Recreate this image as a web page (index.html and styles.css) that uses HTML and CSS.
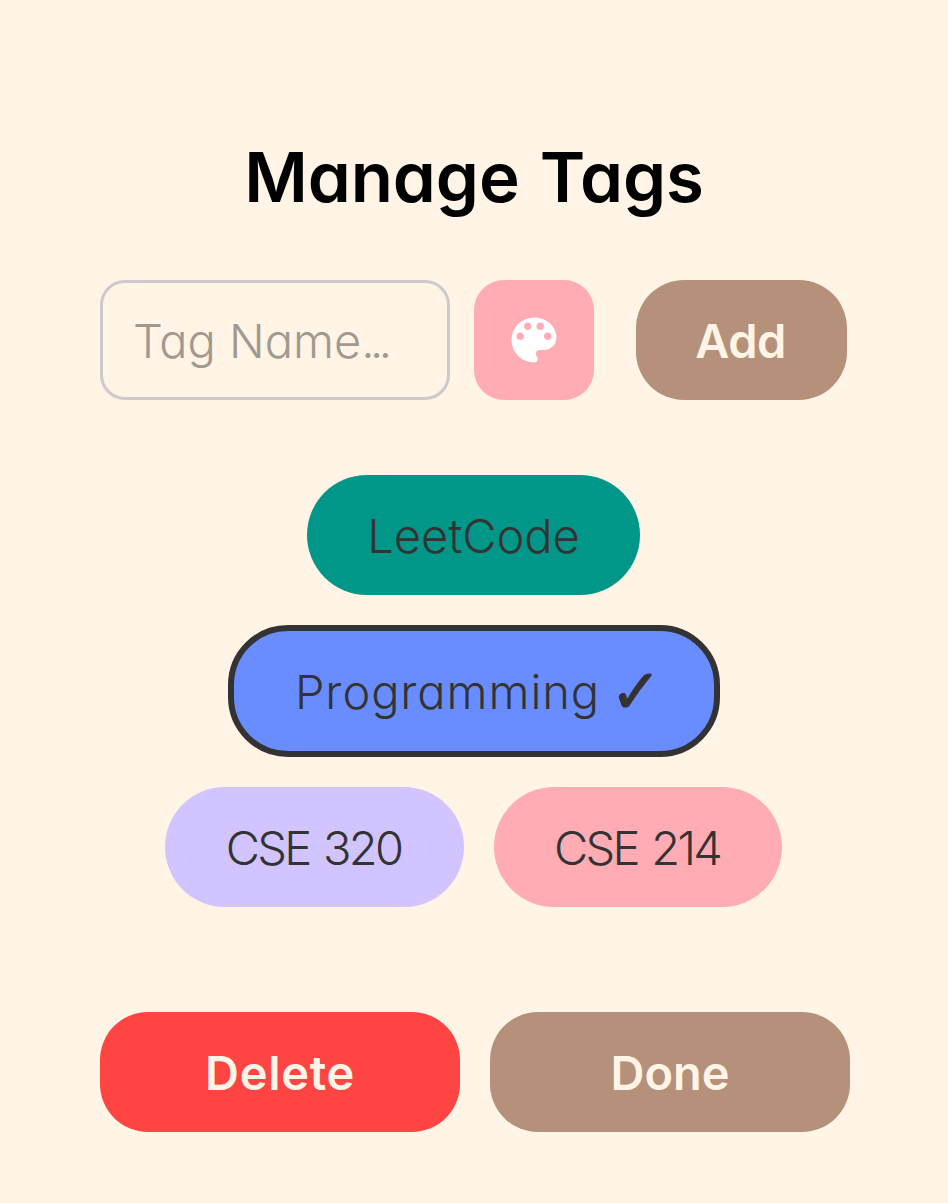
FILE: index.html
```html
<!DOCTYPE html>
<html lang="en">
<head>
<meta charset="utf-8">
<title>Manage Tags</title>
<link rel="stylesheet" href="styles.css">
</head>
<body>
<main class="panel">
  <h1 class="title">Manage Tags</h1>
  <div class="new-tag">
    <div class="tag-input" role="textbox" aria-label="Tag name"><span>Tag Name<span class="dots">...</span></span></div>
    <button class="color-button" type="button" aria-label="Choose color">
      <svg class="palette" viewBox="0 0 24 24"><path fill="currentColor" d="M12 3a9 9 0 0 0 0 18c.83 0 1.5-.67 1.5-1.5 0-.39-.15-.74-.39-1.01-.23-.26-.38-.61-.38-.99 0-.83.67-1.5 1.5-1.5H16c2.76 0 5-2.24 5-5 0-4.42-4.03-8-9-8zm-5.5 9C5.67 12 5 11.33 5 10.5S5.67 9 6.5 9 8 9.67 8 10.5 7.33 12 6.5 12zm3-4C8.67 8 8 7.33 8 6.5S8.67 5 9.5 5s1.5.67 1.5 1.5S10.33 8 9.5 8zm5 0c-.83 0-1.5-.67-1.5-1.5S13.67 5 14.5 5s1.5.67 1.5 1.5S15.33 8 14.5 8zm3 4c-.83 0-1.5-.67-1.5-1.5S16.67 9 17.5 9s1.5.67 1.5 1.5-.67 1.5-1.5 1.5z"/></svg>
    </button>
    <button class="button add" type="button"><span>Add</span></button>
  </div>
  <section class="tags">
    <button class="tag leetcode"><span>LeetCode</span></button>
    <button class="tag programming"><span>Programming</span><span class="check">✓</span></button>
    <button class="tag cse320"><span>CSE 320</span></button>
    <button class="tag cse214"><span>CSE 214</span></button>
  </section>
  <footer class="actions">
    <button class="button delete"><span>Delete</span></button>
    <button class="button done"><span>Done</span></button>
  </footer>
</main>
</body>
</html>
```
FILE: styles.css
```css
* { box-sizing: border-box; }
body {
  margin: 0;
  background: #fff4e5;
  font-family: Inter, sans-serif;
  font-feature-settings: "cv11";
}
button {
  margin: 0;
  border: 0;
  padding: 0;
  font: inherit;
  font-feature-settings: inherit;
}
.panel { height: 1203px; padding: 127px 98px 0 100px; }
.title {
  margin: 0 2px 0 0;
  height: 153px;
  font-size: 69px;
  line-height: 100px;
  font-weight: 600;
  word-spacing: 3px;
  letter-spacing: -0.1px;
  text-align: center;
  white-space: nowrap;
  color: #000;
}
.new-tag { display: flex; height: 120px; }
.tag-input {
  display: flex;
  align-items: center;
  width: 350px;
  height: 120px;
  padding: 1px 0 0 30px;
  border: 3px solid #cec9cc;
  border-radius: 25px;
  font-size: 47px;
  font-weight: 300;
  color: #a0998f;
  white-space: nowrap;
}
.dots { letter-spacing: -4.5px; }
.color-button {
  display: flex;
  align-items: center;
  justify-content: center;
  width: 120px;
  margin: 0 42px 0 24px;
  border-radius: 30px;
  background: #ffacb4;
  color: #fff;
}
.palette { width: 60px; height: 60px; }
.button {
  height: 120px;
  padding: 1px 0 0;
  border-radius: 48px;
  background: #b5907b;
  color: #fff4e5;
  font-size: 47px;
  font-weight: 600;
}
.add { width: 211px; padding-right: 2px; letter-spacing: -0.5px; }
.tags {
  display: flex;
  flex-wrap: wrap;
  justify-content: center;
  align-content: flex-start;
  gap: 30px;
  margin: 75px 62px 105px 59px;
}
.tag {
  height: 120px;
  padding-top: 1px;
  border-radius: 60px;
  color: #333;
  font-size: 47px;
  font-weight: 300;
  white-space: nowrap;
}
.leetcode { width: 333px; background: #009688; }
.programming {
  width: 492px;
  height: 132px;
  border: 6px solid #333;
  background: #698dff;
  letter-spacing: 0.9px;
}
.check {
  display: inline-block;
  width: 40px;
  margin-left: 10px;
  margin-right: 2px;
  font: 400 62px/0 "DejaVu Sans", sans-serif;
  vertical-align: -4px;
  -webkit-text-stroke: 1px #333;
}
.cse320, .cse214 { padding-right: 2px; word-spacing: 3px; letter-spacing: -2.7px; }
.cse320 { width: 299px; background: #d2c4ff; }
.cse214 { width: 288px; background: #ffacb4; }
.actions { display: flex; gap: 30px; }
.actions .button { width: 360px; }
.actions .delete { background: #ff4444; letter-spacing: 0.7px; }
```
